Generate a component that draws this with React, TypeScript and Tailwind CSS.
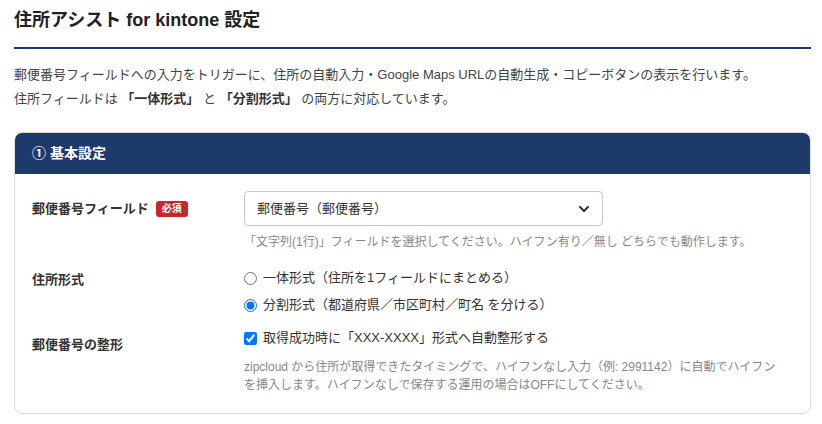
import React from "react";
import { ChevronDown } from "lucide-react";

const FONT = {
  fontFamily:
    '"Liberation Sans", "Noto Sans CJK JP", "Noto Sans", sans-serif',
};

export default function App() {
  return (
    <div className="min-h-[424px] bg-white px-[14px] pr-[11px] pt-[6px] text-[#333]" style={FONT}>
      {/* Page header */}
      <h1 className="border-b-2 border-[#1e3a6b] pb-[13px] text-[18px] font-bold leading-[28px] text-[#222]">
        住所アシスト for kintone 設定
      </h1>
      <p className="mt-[14px] text-[13px] leading-[24px] text-[#444]">
        郵便番号フィールドへの入力をトリガーに、住所の自動入力・Google Maps URLの自動生成・コピーボタンの表示を行います。
        <br />
        住所フィールドは <b className="text-[#333]">「一体形式」</b> と{" "}
        <b className="text-[#333]">「分割形式」</b> の両方に対応しています。
      </p>

      {/* Settings card */}
      <div className="mt-[21px] overflow-hidden rounded-[8px] border border-[#dcdcdc]">
        <div className="flex h-[41px] items-center bg-[#1e3a6b] px-[17px] text-[14px] font-bold text-white">
          ① 基本設定
        </div>
        <div className="px-[17px] pt-[17px] pb-[19px]">
          {/* Row 1 */}
          <div className="grid grid-cols-[212px_1fr]">
            <div className="flex h-[35px] items-center gap-[7px] text-[13px] font-bold">
              郵便番号フィールド
              <span className="rounded-[3px] bg-[#c62828] px-[6px] text-[10px] leading-[16px] font-bold text-white">
                必須
              </span>
            </div>
            <div>
              <div className="flex h-[35px] w-[359px] items-center justify-between rounded-[4px] border border-[#c8c8c8] pr-[10px] pl-[12px] text-[13px]">
                郵便番号（郵便番号）
                <ChevronDown size={16} strokeWidth={3} className="text-[#333]" />
              </div>
              <p className="mt-[7px] text-[12px] leading-[18px] text-[#888]">
                「文字列(1行)」フィールドを選択してください。ハイフン有り／無し どちらでも動作します。
              </p>
            </div>
          </div>

          {/* Row 2 */}
          <div className="mt-[17px] grid grid-cols-[212px_1fr]">
            <div className="pt-[2px] text-[13px] font-bold leading-[20px]">住所形式</div>
            <div className="flex flex-col gap-[7px] text-[13px] leading-[20px]">
              <label className="flex items-center gap-[6px]">
                <input type="radio" name="fmt" className="m-0 h-[13px] w-[13px]" readOnly />
                一体形式（住所を1フィールドにまとめる）
              </label>
              <label className="flex items-center gap-[6px]">
                <input type="radio" name="fmt" className="m-0 h-[13px] w-[13px]" defaultChecked />
                分割形式（都道府県／市区町村／町名 を分ける）
              </label>
            </div>
          </div>

          {/* Row 3 */}
          <div className="mt-[13px] grid grid-cols-[212px_1fr]">
            <div className="pt-[7px] text-[13px] font-bold leading-[20px]">郵便番号の整形</div>
            <div>
              <label className="flex items-center gap-[6px] text-[13px] leading-[20px]">
                <input type="checkbox" className="m-0 h-[13px] w-[13px]" defaultChecked />
                取得成功時に「XXX-XXXX」形式へ自動整形する
              </label>
              <p className="mt-[10px] text-[12px] leading-[18px] text-[#888]">
                zipcloud から住所が取得できたタイミングで、ハイフンなし入力（例: 2991142）に自動でハイフン
                <br />
                を挿入します。ハイフンなしで保存する運用の場合はOFFにしてください。
              </p>
            </div>
          </div>
        </div>
      </div>
    </div>
  );
}
